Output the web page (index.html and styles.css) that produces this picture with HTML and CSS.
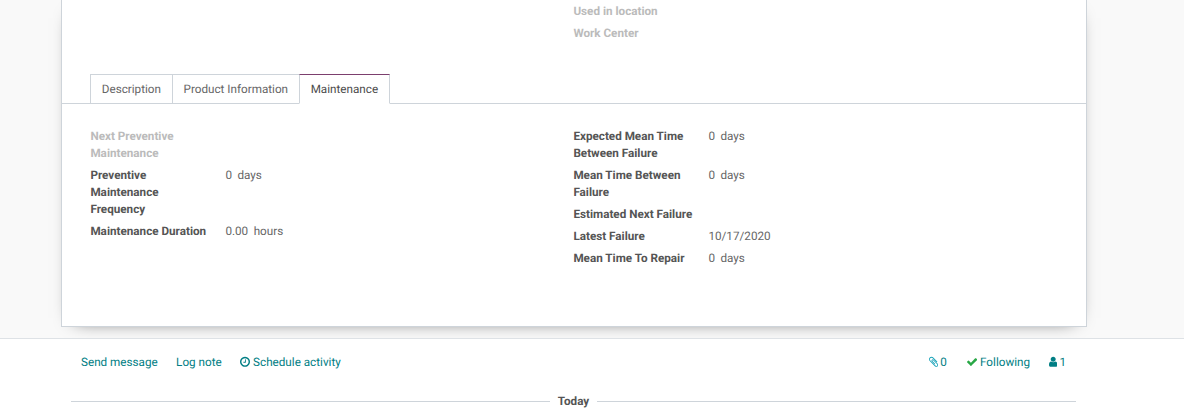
FILE: index.html
```html
<!DOCTYPE html>
<html lang="en">
<head>
<meta charset="utf-8">
<title>Equipment</title>
<link rel="stylesheet" href="styles.css">
</head>
<body>
<div class="sheet-wrap">
  <main class="sheet">
    <div class="top-fields">
      <div class="col"></div>
      <div class="col">
        <div class="row"><span class="label muted">Used in location</span></div>
        <div class="row"><span class="label muted">Work Center</span></div>
      </div>
    </div>
    <nav class="tabs">
      <a class="tab">Description</a>
      <a class="tab">Product Information</a>
      <a class="tab active">Maintenance</a>
    </nav>
    <div class="pane">
      <div class="col">
        <div class="row"><span class="label muted">Next Preventive Maintenance</span></div>
        <div class="row"><span class="label">Preventive Maintenance Frequency</span><span class="value"><span>0</span><span>days</span></span></div>
        <div class="row"><span class="label">Maintenance Duration</span><span class="value"><span>0.00</span><span>hours</span></span></div>
      </div>
      <div class="col">
        <div class="row"><span class="label">Expected Mean Time Between Failure</span><span class="value"><span>0</span><span>days</span></span></div>
        <div class="row"><span class="label">Mean Time Between Failure</span><span class="value"><span>0</span><span>days</span></span></div>
        <div class="row"><span class="label">Estimated Next Failure</span></div>
        <div class="row"><span class="label">Latest Failure</span><span class="value">10/17/2020</span></div>
        <div class="row"><span class="label">Mean Time To Repair</span><span class="value"><span>0</span><span>days</span></span></div>
      </div>
    </div>
  </main>
</div>
<section class="chatter">
  <div class="topbar">
    <div class="actions">
      <a>Send message</a>
      <a>Log note</a>
      <a class="icon-link">
        <svg class="ico" viewBox="128 0 1536 1792" width="10" height="11.7"><path fill="currentColor" d="M1024 544v448q0 14-9 23t-23 9h-320q-14 0-23-9t-9-23v-64q0-14 9-23t23-9h224v-352q0-14 9-23t23-9h64q14 0 23 9t9 23zm416 352q0-148-73-273t-198-198-273-73-273 73-198 198-73 273 73 273 198 198 273 73 273-73 198-198 73-273zm224 0q0 209-103 385.5t-279.5 279.5-385.5 103-385.5-103-279.5-279.5-103-385.5 103-385.5 279.5-279.5 385.5-103 385.5 103 279.5 279.5 103 385.5z"/></svg>Schedule activity</a>
    </div>
    <div class="actions right">
      <a class="icon-link clip">
        <svg class="ico" viewBox="196 0 1400 1792" width="9.2" height="11.7"><path fill="currentColor" d="M1596 1385q0 117-79 196t-196 79q-135 0-235-100l-777-776q-113-115-113-271 0-159 110-270t269-111q158 0 273 113l605 606q10 10 10 22 0 16-30.5 46.5t-46.5 30.5q-13 0-23-10l-606-607q-79-77-181-77-106 0-179 75t-73 181q0 105 76 181l776 777q63 63 145 63 64 0 106-42t42-106q0-82-63-145l-581-581q-26-24-60-24-29 0-48 19t-19 48q0 32 25 59l410 410q10 10 10 22 0 16-31 47t-47 31q-12 0-22-10l-410-410q-63-61-63-149 0-82 57-139t139-57q88 0 149 63l581 581q100 98 100 235z"/></svg>0</a>
      <a class="icon-link">
        <svg class="ico check" viewBox="121 0 1550 1792" width="10.2" height="11.7"><path fill="currentColor" d="M1671 566q0 40-28 68l-724 724-136 136q-28 28-68 28t-68-28l-136-136-362-362q-28-28-28-68t28-68l136-136q28-28 68-28t68 28l294 295 656-657q28-28 68-28t68 28l136 136q28 28 28 68z"/></svg>Following</a>
      <a class="icon-link user">
        <svg class="ico" viewBox="256 0 1280 1792" width="8.4" height="11.7"><path fill="currentColor" d="M1536 1399q0 109-62.5 187t-150.5 78h-854q-88 0-150.5-78t-62.5-187q0-85 8.5-160.5t31.5-152 58.5-131 94-89 134.5-34.5q131 128 313 128t313-128q76 0 134.5 34.5t94 89 58.5 131 31.5 152 8.5 160.5zm-256-887q0 159-112.5 271.5t-271.5 112.5-271.5-112.5-112.5-271.5 112.5-271.5 271.5-112.5 271.5 112.5 112.5 271.5z"/></svg>1</a>
    </div>
  </div>
  <div class="date-sep"><span>Today</span></div>
</section>
</body>
</html>
```
FILE: styles.css
```css
* { box-sizing: border-box; }
html, body { margin: 0; padding: 0; }
body {
  height: 412px;
  overflow: hidden;
  background: #f9f9f9;
  font-family: Roboto, "Noto Sans", sans-serif;
  font-size: 11.7px;
  line-height: 17px;
  color: #666;
  text-rendering: geometricPrecision;
}
.sheet-wrap { padding-left: 61px; width: 1087px; height: 338px; }
.sheet {
  height: 327px;
  background: #fff;
  border: 1px solid #ced4da;
  border-top: 0;
  box-shadow: 0 4.5px 18px -13.5px #000;
}
.top-fields { display: flex; height: 74px; padding: 2.5px 28.4px 0; }
.col { width: 483px; flex: none; }
.row { display: flex; align-items: flex-start; margin-bottom: 5px; }
.label { width: 135px; flex: none; padding-right: 14px; font-weight: 700; color: #555; }
.label.muted { color: #bbb; }
.top-fields .label { width: auto; }
.value { display: flex; gap: 5.5px; }
.tabs {
  display: flex;
  height: 30px;
  padding-left: 28px;
  border-bottom: 1px solid #ced4da;
}
.tab {
  height: 30px;
  padding: 5.5px 10.8px 0;
  border: 1px solid #ced4da;
  margin-left: -1px;
  background: #fff;
  color: #666;
}
.tab:first-child { margin-left: 0; }
.tab.active {
  border-top-color: #7c3f6e;
  border-bottom-color: #fff;
  color: #4c4c4c;
}
.pane { display: flex; padding: 23.5px 28.4px 0; }
.chatter {
  height: 74px;
  background: #fff;
  border-top: 1px solid #dee2e6;
}
.topbar {
  display: flex;
  justify-content: space-between;
  padding: 14.5px 21px 0 81px;
  width: 1087px;
}
.actions { display: flex; gap: 18.4px; color: #017e84; }
.actions.right { gap: 19px; }
.icon-link { display: inline-flex; align-items: center; gap: 3px; }
.clip { gap: 2px; margin-right: 1px; }
.user { gap: 2px; }
.ico { flex: none; }
.check { color: #28a745; }
.clip .ico { color: #17a2b8; }
.date-sep {
  display: flex;
  align-items: center;
  gap: 8px;
  width: 1005px;
  margin: 22px 0 0 71px;
  font-weight: 700;
  color: #555;
}
.date-sep::before, .date-sep::after {
  content: "";
  flex: 1;
  height: 1px;
  background: #ced4da;
}
```
